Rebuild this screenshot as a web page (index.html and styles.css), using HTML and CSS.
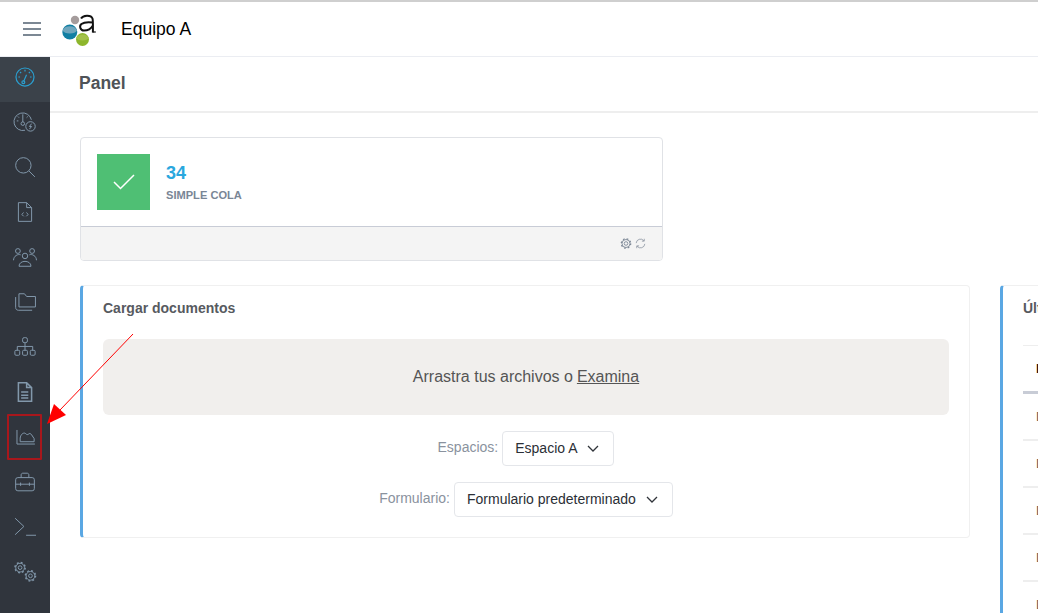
FILE: index.html
```html
<!DOCTYPE html>
<html lang="es">
<head>
<meta charset="utf-8">
<title>Panel</title>
<link rel="stylesheet" href="styles.css">
</head>
<body>
<header class="topbar">
  <button class="burger" aria-label="Menu"><span></span><span></span><span></span></button>
  <svg class="logo" width="36" height="34" viewBox="0 0 36 34">
    <circle cx="13" cy="8" r="4.200" fill="#a59c9c"/>
    <circle cx="7.800" cy="20" r="7.500" fill="#117fa3"/>
    <path d="M.6 18.500a7.500 6 0 0 1 14.400 0a7.500 4 0 0 1-14.400 0z" fill="#6fa6bd"/>
    <circle cx="20.500" cy="27.500" r="6.500" fill="#8db62c"/>
    <path d="M14.300 26a6.500 5 0 0 1 12.400 0a6.500 3.500 0 0 1-12.400 0z" fill="#a3c14a"/>
    <path d="M19 6.500c2-3.500 10-4 11.500 0c.6 1.500.4 5 .4 14M30.900 10.500c-4-.5-9-.4-11.500 1.500c-2.500 2.200-1 6.500 2.500 6.500c3.500 0 7-1.500 9-5" fill="none" stroke="#111" stroke-width="2"/>
    <path d="M30.500 20h3.300" stroke="#111" stroke-width="1.200"/>
  </svg>
  <span class="team">Equipo A</span>
</header>
<div class="shell">
  <nav class="side">
    <a class="item active"><svg viewBox="0 0 20 20"><circle cx="10" cy="10" r="8.200"/><path d="M8.700 14.200l2.700-6.200M4 10h1.500M10 3.500V5M5.500 5.500l1 1M14.500 5.500l-1 1M16 10h-1.500"/><circle cx="8.500" cy="14.700" r="1.300"/></svg></a>
    <a class="item"><svg viewBox="0 0 20 20"><path d="M10 17.500A8 8 0 1 1 15.800 8"/><path d="M8 3v7M2.500 9h1.500M12.500 5l-1 1M3.500 5l1 1"/><circle cx="8" cy="11.500" r="1.600"/><circle cx="15" cy="14" r="4.300"/><path d="M16 11.500l-2 2.600h2l-2 2.400"/></svg></a>
    <a class="item"><svg viewBox="0 0 20 20"><circle cx="8.500" cy="8.500" r="7"/><path d="M13.700 13.700l5.300 5.300"/></svg></a>
    <a class="item"><svg viewBox="0 0 20 20"><path d="M4 1.500h7.500l4.500 4.500v12.500h-12zM11.500 1.500v4.500h4.500"/><path d="M8.800 10.500l-1.700 1.700l1.700 1.700M11.200 10.500l1.700 1.700l-1.700 1.700"/></svg></a>
    <a class="item"><svg viewBox="0 0 22 20"><circle cx="11" cy="9" r="2.500"/><circle cx="4.500" cy="4.500" r="2.200"/><circle cx="17.500" cy="4.500" r="2.200"/><path d="M5.500 18.500c0-6 11-6 11 0zM.5 13c0-4 4-6 6.500-5M21.500 13c0-4-4-6-6.500-5"/></svg></a>
    <a class="item"><svg viewBox="0 0 20 20"><path d="M4.500 2.500h5l2 2.500h8v9.500h-15z"/><path d="M1.500 5.500v9.500c0 1.500 1 2.500 2.500 2.500h12.500"/></svg></a>
    <a class="item"><svg viewBox="0 0 20 20"><rect x="7.800" y="1.500" width="4.400" height="4.500" rx="1.500"/><rect x=".8" y="13" width="4.400" height="4.500" rx="1"/><rect x="7.800" y="13" width="4.400" height="4.500" rx="1"/><rect x="14.800" y="13" width="4.400" height="4.500" rx="1"/><path d="M10 6v7M3 13v-3.500h14v3.500"/></svg></a>
    <a class="item"><svg viewBox="0 0 20 20" class="heavy"><path d="M4 1.500h7.500l4.500 4.500v12.500h-12zM11.500 1.500v4.500h4.500"/><path d="M6.500 10h6.500M6.500 13h6.500M6.500 15.500h6.500"/></svg></a>
    <a class="item"><svg viewBox="0 0 20 20"><path d="M2.700 3.600v12.800h16.300"/><path d="M5.600 14.300V11C6 8 8 6 10 6.500C11 7 11.500 8.500 13 7.500C14 6.500 15 6.500 16 8L18.300 11.500V14.300Z"/></svg></a>
    <a class="item"><svg viewBox="0 0 20 20"><rect x="1.500" y="6" width="17" height="12" rx="2"/><path d="M6.500 6v-2.500c0-1 .8-1.500 1.500-1.500h4c.7 0 1.500.5 1.500 1.500v2.500M1.500 12h17M6 10.500v3M14 10.500v3"/></svg></a>
    <a class="item"><svg viewBox="0 0 20 20"><path d="M1 2l8 7.500l-8 7.500M11 17.500h9"/></svg></a>
    <a class="item"><svg viewBox="0 0 22 20"><circle cx="6.500" cy="6" r="1.700"/><circle cx="6.500" cy="6" r="4"/><circle class="teeth" cx="6.500" cy="6" r="4.700"/><circle cx="16" cy="13.500" r="1.700"/><circle cx="16" cy="13.500" r="4"/><circle class="teeth" cx="16" cy="13.500" r="4.700"/></svg></a>
  </nav>
  <main class="content">
    <div class="page-head"><h1>Panel</h1></div>
    <div class="page-body">
      <section class="widget">
        <div class="widget-main">
          <div class="tile"><svg width="22" height="16" viewBox="0 0 22 16"><path d="M1 8l6.500 6.500L21 1" fill="none" stroke="#fff" stroke-width="1.500"/></svg></div>
          <div class="stat">
            <div class="num">34</div>
            <div class="lbl">SIMPLE COLA</div>
          </div>
        </div>
        <div class="widget-foot">
          <svg width="12" height="13" viewBox="0 0 12 13"><circle cx="6" cy="6.500" r="1.800"/><circle cx="6" cy="6.500" r="4"/><circle class="teeth" cx="6" cy="6.500" r="4.700"/></svg>
          <svg width="11" height="11" viewBox="0 0 14 14"><path d="M1.500 6.500a5.500 5.500 0 0 1 9.800-3M12.500 7.500a5.500 5.500 0 0 1-9.800 3M11.800 1v3h-3M2.200 13v-3h3"/></svg>
        </div>
      </section>
      <div class="columns">
        <section class="card upload">
          <h2>Cargar documentos</h2>
          <div class="drop">Arrastra tus archivos o <u>Examina</u></div>
          <div class="field">
            <label>Espacios:</label>
            <div class="select">Espacio A<svg width="12" height="7" viewBox="0 0 12 7"><path d="M1 1l5 5l5-5"/></svg></div>
          </div>
          <div class="field">
            <label>Formulario:</label>
            <div class="select">Formulario predeterminado<svg width="12" height="7" viewBox="0 0 12 7"><path d="M1 1l5 5l5-5"/></svg></div>
          </div>
        </section>
        <section class="card recent">
          <h2>Últimos documentos</h2>
          <div class="row head">Documento</div>
          <div class="row first">Documento</div>
          <div class="row">Documento</div>
          <div class="row">Documento</div>
          <div class="row">Documento</div>
          <div class="row">Documento</div>
        </section>
      </div>
    </div>
  </main>
</div>
<div class="annot-box"></div>
<svg class="annot-arrow" width="140" height="100" viewBox="0 0 140 100">
  <path d="M133 4L60 80" stroke="#f00" stroke-width="1" fill="none"/>
  <path d="M47 94L54 74L66 85z" fill="#f00"/>
</svg>
</body>
</html>
```
FILE: styles.css
```css
* { box-sizing: border-box; }
html, body { margin: 0; height: 613px; overflow: hidden; }
body { font-family: "Liberation Sans", Arial, sans-serif; background: #fff; color: #3f4047; position: relative; }
.topbar { height: 57px; display: flex; align-items: center; border-top: 2px solid #cfcfcf; border-bottom: 1px solid #ebedf2; background: #fff; }
.burger { width: 18px; height: 14px; margin-left: 23px; padding: 0; border: 0; background: none; display: flex; flex-direction: column; justify-content: space-between; }
.burger span { display: block; height: 2px; background: #7c8894; }
.logo { margin-left: 21px; margin-top: -1px; }
.team { margin-left: 23px; font-size: 17.5px; color: #000; }
.shell { display: flex; height: 556px; }
.side { width: 50px; flex: none; background: #30353d; display: flex; flex-direction: column; }
.item { height: 45px; flex: none; display: flex; align-items: center; justify-content: center; padding-bottom: 5px; }
.item svg { height: 22px; width: 24px; fill: none; stroke: #8298ab; stroke-width: .9; }
.item.active { background: #3b424a; }
.item.active svg { stroke: #2a9fd0; stroke-width: 1.100; }
.item svg.heavy { stroke-width: 1.400; }
.item svg .teeth, .widget-foot svg .teeth { stroke-width: 1.300; stroke-dasharray: 1.700 2; }
.content { flex: 1; min-width: 0; background: #fff; }
.page-head { height: 56px; border-bottom: 2px solid #eeeeee; display: flex; align-items: center; padding-left: 29px; }
h1 { margin: -2px 0 0; font-size: 17.5px; font-weight: 700; color: #4f5358; }
.page-body { padding: 24px 0 0 30px; }
.widget { width: 583px; height: 124px; border: 1px solid #e0e2e6; border-radius: 4px; display: flex; flex-direction: column; overflow: hidden; }
.widget-main { height: 89px; flex: none; border-bottom: 1px solid #c8ccd6; display: flex; padding: 16px 16px 0; }
.tile { width: 53px; height: 56px; background: #4fbf74; display: flex; align-items: center; justify-content: center; }
.stat { margin-left: 16px; }
.num { font-size: 18px; font-weight: 700; color: #2aa7de; margin-top: 9px; line-height: 20px; }
.lbl { font-size: 11.100px; font-weight: 700; color: #7a8696; margin-top: 5px; line-height: 14px; }
.widget-foot { flex: 1; background: #f4f4f4; display: flex; justify-content: flex-end; align-items: center; gap: 3px; padding: 0 16px 0 0; }
.widget-foot svg { fill: none; stroke: #7f8a98; stroke-width: .9; }
.columns { display: flex; gap: 30px; margin-top: 24px; width: 1190px; }
.card { flex: none; background: #fff; border: 1px solid #f0f0f0; border-left: 3px solid #5aa7e3; border-radius: 4px; padding: 13px 20px 0; }
.card h2 { margin: 0; font-size: 14px; font-weight: 700; color: #575a5f; line-height: 18px; }
.upload { width: 890px; height: 253px; }
.recent { width: 300px; height: 340px; }
.drop { margin-top: 22px; height: 76px; background: #f1efed; border-radius: 6px; display: flex; align-items: center; justify-content: center; gap: 4px; font-size: 16px; color: #555; }
.field { display: flex; align-items: flex-start; justify-content: center; gap: 4px; margin-top: 16px; }
.field + .field { margin-top: 16px; }
.field label { font-size: 14px; color: #8a929e; line-height: 16px; padding-top: 8px; }
.select { height: 35px; display: flex; align-items: center; gap: 10px; padding: 0 14px 1px 12px; border: 1px solid #e4e6ea; border-radius: 4px; font-size: 14px; color: #2b2f36; }
.select svg { fill: none; stroke: #30343a; stroke-width: 1.300; }
.recent .row { height: 47px; line-height: 46px; padding-left: 13px; border-top: 2px solid #eeeeee; font-size: 13px; color: #6b5a50; }
.recent h2 { padding-bottom: 28px; }
.recent .row.head { border-top: 1px solid #eee; border-bottom: 3px solid #c8ccd6; color: #111; font-weight: 700; height: 49px; }
.recent .row.first { border-top: 0; height: 45px; }
.annot-box { position: absolute; left: 7px; top: 414px; width: 35px; height: 46px; border: 2px solid #a8171c; border-radius: 1px; }
.annot-arrow { position: absolute; left: 0; top: 330px; }
```
